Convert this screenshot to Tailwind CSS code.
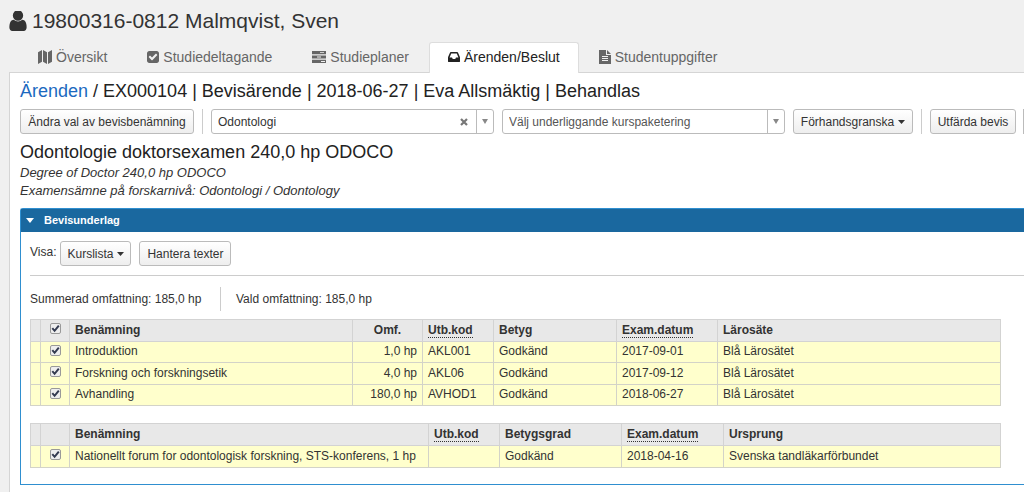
<!DOCTYPE html>
<html lang="sv">
<head>
<meta charset="utf-8">
<meta name="viewport" content="width=device-width, initial-scale=1">
<title>Ärenden/Beslut</title>
<script src="https://cdn.jsdelivr.net/npm/@tailwindcss/browser@4"></script>
</head>
<body class="flex min-h-screen flex-col overflow-x-hidden bg-[#f0f0f0] font-['Liberation_Sans',Arial,sans-serif] text-xs text-[#333]">
<svg class="hidden" aria-hidden="true">
  <symbol id="tick" viewBox="0 0 11 11"><path d="M2.3 5.2 4.6 7.8 8.8 2.6" fill="none" stroke="#333a50" stroke-width="2"/></symbol>
</svg>

<header>
  <h1 class="flex h-[42px] items-center gap-1 pl-2 text-[21px] text-[#333]">
    <svg class="size-5" viewBox="180 180 1432 1484" fill="currentColor" aria-hidden="true"><path d="M1536 1399q0 109-62.5 187t-150.5 78h-854q-88 0-150.5-78t-62.5-187q0-85 8.500-160.500t31.500-152 58.500-131 94-89 134.500-34.500q131 128 313 128t313-128q76 0 134.500 34.500t94 89 58.500 131 31.500 152 8.500 160.500zm-256-887q0 159-112.500 271.500t-271.500 112.500-271.500-112.500-112.500-271.500 112.500-271.500 271.500-112.500 271.500 112.500 112.500 271.500z"/></svg>
    <span>19800316-0812 Malmqvist, Sven</span>
  </h1>
  <nav class="flex h-[30px] items-stretch pl-[18px] text-sm text-[#666]">
    <a href="#" class="flex items-center gap-1 px-5">
      <svg class="h-[14px] w-[14px]" viewBox="0 0 14 14" fill="currentColor" aria-hidden="true"><path d="M0 2.200 4 0v11.800L0 14zM5 0l4 2.200V14l-4-2.200zM10 2.200 14 0v11.800L10 14z"/></svg>
      Översikt</a>
    <a href="#" class="flex items-center gap-1 px-5">
      <svg class="size-3" viewBox="128 128 1536 1536" fill="currentColor" aria-hidden="true"><path d="M813 1299l614-614q19-19 19-45t-19-45l-102-102q-19-19-45-19t-45 19l-467 467-211-211q-19-19-45-19t-45 19l-102 102q-19 19-19 45t19 45l358 358q19 19 45 19t45-19zm851-883v960q0 119-84.500 203.500t-203.500 84.500h-960q-119 0-203.500-84.500t-84.500-203.500v-960q0-119 84.500-203.500t203.500-84.500h960q119 0 203.500 84.500t84.500 203.500z"/></svg>
      Studiedeltagande</a>
    <a href="#" class="flex items-center gap-1 px-5">
      <svg class="h-3 w-[14px]" viewBox="0 0 14 12" aria-hidden="true"><path fill="currentColor" d="M0 0h14v3.200H0zM0 4.400h14v3.200H0zM0 8.800h14V12H0z"/><path fill="#f0f0f0" d="M8 1.200h4v.9H8zM5 5.600h4v.9H5zM9 10h4v.9H9z"/></svg>
      Studieplaner</a>
    <a href="#" aria-current="page" class="z-10 -mb-px flex items-center gap-1 rounded-t-[3px] border border-b-0 border-[#ddd] bg-white px-[18px] pb-0.5 text-[#222]">
      <svg class="size-3" viewBox="128 192 1536 1408" fill="currentColor" aria-hidden="true"><path d="M1151 960h316q-1-3-2.500-8t-2.500-8l-212-496h-708l-212 496q-1 2-2.500 8t-2.500 8h316l95 192h320zm513 30v482q0 26-19 45t-45 19h-1408q-26 0-45-19t-19-45v-482q0-62 25-123l238-552q10-25 36.500-42t52.500-17h832q26 0 52.500 17t36.500 42l238 552q25 61 25 123z"/></svg>
      Ärenden/Beslut</a>
    <a href="#" class="flex items-center gap-1 px-5">
      <svg class="h-[14px] w-3" viewBox="0 0 12 14" aria-hidden="true"><path fill="currentColor" d="M0 0h7v5h5v9H0zM8 0l4 4H8z"/><path stroke="#f0f0f0" d="M3 6.500h6M3 8.500h6M3 10.500h6"/></svg>
      Studentuppgifter</a>
  </nav>
</header>

<main class="ml-[9px] flex-1 border-t border-l border-[#d5d5d5] bg-white pl-[10px]">
  <h2 class="flex h-9 items-center text-lg whitespace-pre text-[#222]"><a href="#" class="text-[#1b69c0]">Ärenden</a> / EX000104 | Bevisärende | 2018-06-27 | Eva Allsmäktig | Behandlas</h2>

  <div class="flex h-[25px] items-stretch gap-2 whitespace-nowrap">
    <button class="w-[174px] shrink-0 rounded-[3px] border border-[#bbb] bg-linear-to-b from-white to-[#eee]">Ändra val av bevisbenämning</button>
    <span class="w-px shrink-0 bg-[#ccc]"></span>
    <div class="flex min-w-[283px] flex-1 items-stretch rounded-[3px] border border-[#bbb] bg-white">
      <select aria-label="Examensämne" class="min-w-0 flex-1 appearance-none pl-1.5"><option>Odontologi</option></select>
      <button aria-label="Rensa" class="px-2 text-[#777]"><svg class="size-2" viewBox="0 0 8 8" aria-hidden="true"><path d="m1 1 6 6M7 1 1 7" stroke="currentColor" stroke-width="2.200"/></svg></button>
      <button aria-label="Visa val" class="flex w-[17px] items-center justify-center border-l border-[#bbb] text-[#888]"><svg class="h-[5px] w-1.5" viewBox="0 0 6 5" aria-hidden="true"><path d="M0 0h6L3 5z" fill="currentColor"/></svg></button>
    </div>
    <div class="flex min-w-[283px] flex-1 items-stretch rounded-[3px] border border-[#bbb] bg-white">
      <select aria-label="Kurspaketering" class="min-w-0 flex-1 appearance-none pl-1.5 text-[#555]"><option>Välj underliggande kurspaketering</option></select>
      <button aria-label="Visa val" class="flex w-[17px] items-center justify-center border-l border-[#bbb] text-[#888]"><svg class="h-[5px] w-1.5" viewBox="0 0 6 5" aria-hidden="true"><path d="M0 0h6L3 5z" fill="currentColor"/></svg></button>
    </div>
    <button class="flex w-[120px] shrink-0 items-center justify-center gap-1 rounded-[3px] border border-[#bbb] bg-linear-to-b from-white to-[#eee]">Förhandsgranska <svg class="h-1 w-[7px]" viewBox="0 0 7 4" aria-hidden="true"><path d="M0 0h7L3.500 4z" fill="currentColor"/></svg></button>
    <span class="w-px shrink-0 bg-[#ccc]"></span>
    <button class="w-[86px] shrink-0 rounded-[3px] border border-[#bbb] bg-linear-to-b from-white to-[#eee]">Utfärda bevis</button>
    <span class="-ml-px w-px shrink-0 bg-[#bbb]"></span>
  </div>

  <h3 class="mt-1.5 text-lg leading-6 text-[#222]">Odontologie doktorsexamen 240,0 hp ODOCO</h3>
  <p class="text-[13px] leading-[18px] italic">Degree of Doctor 240,0 hp ODOCO</p>
  <p class="text-[13px] leading-[18px] italic">Examensämne på forskarnivå: Odontologi / Odontology</p>

  <section class="mt-2 rounded-tl-[3px] border border-r-0 border-[#2f8fd0]">
    <h4 class="flex h-[23px] items-center gap-2.5 bg-[#1a689f] pl-[5px] text-[11px] font-bold text-white"><svg class="h-[5px] w-2" viewBox="0 0 8 5" aria-hidden="true"><path d="M0 0h8L4 5z" fill="currentColor"/></svg>Bevisunderlag</h4>
    <div class="pt-[9px] pr-[23px] pb-4 pl-[9px]">
      <div class="-mr-[23px] flex h-[35px] items-start border-b border-[#ccc]">
        <span class="mr-1 leading-[22px]">Visa:</span>
        <button class="mr-2 flex h-[25px] w-[71px] items-center justify-center gap-1 rounded-[3px] border border-[#bbb] bg-linear-to-b from-white to-[#eee]">Kurslista <svg class="h-1 w-[7px]" viewBox="0 0 7 4" aria-hidden="true"><path d="M0 0h7L3.500 4z" fill="currentColor"/></svg></button>
        <button class="h-[25px] w-[92px] rounded-[3px] border border-[#bbb] bg-linear-to-b from-white to-[#eee]">Hantera texter</button>
      </div>
      <div class="mt-[11px] mb-2 flex h-6 items-center">
        <span class="w-[190px]">Summerad omfattning: 185,0 hp</span>
        <span class="h-6 border-l border-[#ccc] pl-[15px] leading-6">Vald omfattning: 185,0 hp</span>
      </div>

      <table class="w-full table-fixed border-collapse text-left whitespace-nowrap [&_td]:border [&_td]:border-[#d3d3c8] [&_td]:px-[5px] [&_td]:pt-0 [&_td]:pb-0.5 [&_th]:border [&_th]:border-[#d3d3d3] [&_th]:px-[5px] [&_th]:pt-0 [&_th]:pb-0.5">
        <colgroup><col class="w-[10px]"><col class="w-[29px]"><col class="w-[283px]"><col class="w-[70px]"><col class="w-[71px]"><col class="w-[123px]"><col class="w-[101px]"><col></colgroup>
        <thead><tr class="h-[22px] bg-[#e8e8e8]">
          <th></th>
          <th><span class="mb-0.5 grid place-items-center"><input type="checkbox" checked aria-label="Välj alla" class="size-[11px] appearance-none rounded-[2px] border border-[#999] bg-[#eee] [grid-area:1/1]"><svg class="pointer-events-none size-[11px] [grid-area:1/1]" aria-hidden="true"><use href="#tick"/></svg></span></th>
          <th>Benämning</th><th class="text-center">Omf.</th><th><abbr title="Utbildningskod" class="border-b border-dotted border-[#333] no-underline">Utb.kod</abbr></th><th>Betyg</th><th><abbr title="Examinationsdatum" class="border-b border-dotted border-[#333] no-underline">Exam.datum</abbr></th><th>Lärosäte</th>
        </tr></thead>
        <tbody class="bg-[#ffffcc]">
          <tr class="h-[21px]"><td></td><td><span class="mb-0.5 grid place-items-center"><input type="checkbox" checked aria-label="Introduktion" class="size-[11px] appearance-none rounded-[2px] border border-[#999] bg-[#eee] [grid-area:1/1]"><svg class="pointer-events-none size-[11px] [grid-area:1/1]" aria-hidden="true"><use href="#tick"/></svg></span></td><td>Introduktion</td><td class="text-right">1,0 hp</td><td>AKL001</td><td>Godkänd</td><td>2017-09-01</td><td>Blå Lärosätet</td></tr>
          <tr class="h-[22px]"><td></td><td><span class="mb-0.5 grid place-items-center"><input type="checkbox" checked aria-label="Forskning och forskningsetik" class="size-[11px] appearance-none rounded-[2px] border border-[#999] bg-[#eee] [grid-area:1/1]"><svg class="pointer-events-none size-[11px] [grid-area:1/1]" aria-hidden="true"><use href="#tick"/></svg></span></td><td>Forskning och forskningsetik</td><td class="text-right">4,0 hp</td><td>AKL06</td><td>Godkänd</td><td>2017-09-12</td><td>Blå Lärosätet</td></tr>
          <tr class="h-[21px]"><td></td><td><span class="mb-0.5 grid place-items-center"><input type="checkbox" checked aria-label="Avhandling" class="size-[11px] appearance-none rounded-[2px] border border-[#999] bg-[#eee] [grid-area:1/1]"><svg class="pointer-events-none size-[11px] [grid-area:1/1]" aria-hidden="true"><use href="#tick"/></svg></span></td><td>Avhandling</td><td class="text-right">180,0 hp</td><td>AVHOD1</td><td>Godkänd</td><td>2018-06-27</td><td>Blå Lärosätet</td></tr>
        </tbody>
      </table>

      <table class="mt-[17px] w-full table-fixed border-collapse text-left whitespace-nowrap [&_td]:border [&_td]:border-[#d3d3c8] [&_td]:px-[5px] [&_td]:pt-0 [&_td]:pb-0.5 [&_th]:border [&_th]:border-[#d3d3d3] [&_th]:px-[5px] [&_th]:pt-0 [&_th]:pb-0.5">
        <colgroup><col class="w-[10px]"><col class="w-[29px]"><col class="w-[359px]"><col class="w-[71px]"><col class="w-[122px]"><col class="w-[102px]"><col></colgroup>
        <thead><tr class="h-[22px] bg-[#e8e8e8]">
          <th></th><th></th><th>Benämning</th><th><abbr title="Utbildningskod" class="border-b border-dotted border-[#333] no-underline">Utb.kod</abbr></th><th>Betygsgrad</th><th><abbr title="Examinationsdatum" class="border-b border-dotted border-[#333] no-underline">Exam.datum</abbr></th><th>Ursprung</th>
        </tr></thead>
        <tbody class="bg-[#ffffcc]">
          <tr class="h-[22px]"><td></td><td><span class="mb-0.5 grid place-items-center"><input type="checkbox" checked aria-label="Nationellt forum" class="size-[11px] appearance-none rounded-[2px] border border-[#999] bg-[#eee] [grid-area:1/1]"><svg class="pointer-events-none size-[11px] [grid-area:1/1]" aria-hidden="true"><use href="#tick"/></svg></span></td><td>Nationellt forum for odontologisk forskning, STS-konferens, 1 hp</td><td></td><td>Godkänd</td><td>2018-04-16</td><td>Svenska tandläkarförbundet</td></tr>
        </tbody>
      </table>
    </div>
  </section>
</main>
</body>
</html>
